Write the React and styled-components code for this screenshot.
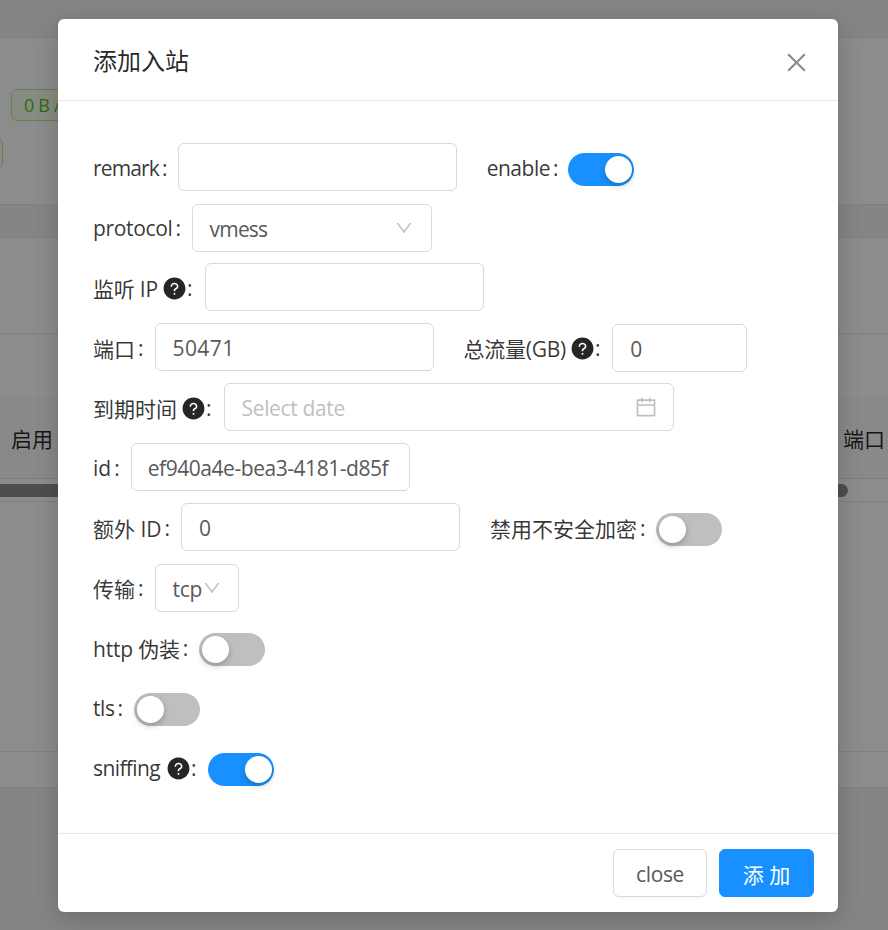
import React from 'react'
import styled, { createGlobalStyle } from 'styled-components'
import { AiFillQuestionCircle, AiOutlineCalendar, AiOutlineClose, AiOutlineDown } from 'react-icons/ai'

const GlobalStyle = createGlobalStyle`
  * { box-sizing: border-box; }
  html, body { margin: 0; height: 100%; overflow: hidden; }
  body {
    background: #f0f2f5;
    color: rgba(0, 0, 0, 0.85);
    font-family: "Open Sans", "Noto Sans CJK SC", sans-serif;
    font-size: 21px;
  }
`

const Page = styled.div`
  position: relative;
  width: 888px;
  height: 930px;
  overflow: hidden;
  display: flex;
  flex-direction: column;
`

const Band = styled.div`
  height: ${p => p.$h}px;
  flex: none;
`

const SummaryCard = styled.div`
  height: 168px;
  flex: none;
  background: #fff;
  border-top: 1px solid #e8e8e8;
  border-bottom: 1px solid #e8e8e8;
  padding: 51px 0 0 11px;
  display: flex;
  flex-direction: column;
  gap: 17px;
  align-items: flex-start;
`

const Tag = styled.span`
  height: ${p => p.$h}px;
  padding: 0 12px;
  display: inline-flex;
  align-items: center;
  font-size: 18px;
  letter-spacing: -0.3px;
  color: #52c41a;
  background: #f6ffed;
  border: 1px solid #b7eb8f;
  border-radius: 6px;
`

// second tag of the row, only its right end sticks out on the page
const TagEnd = styled(Tag)`
  width: 20px;
  padding: 0;
  margin-left: -28px;
`

const TableCard = styled.div`
  height: 551px;
  flex: none;
  background: #fff;
  border-bottom: 1px solid #e8e8e8;
  display: flex;
  flex-direction: column;
`

const Toolbar = styled.div`
  height: 97px;
  flex: none;
  border-top: 1px solid #e8e8e8;
  border-bottom: 1px solid #e8e8e8;
`

const TableHead = styled.div`
  height: 81px;
  margin-top: 64px;
  flex: none;
  background: #fafafa;
  border-bottom: 1px solid #e8e8e8;
  padding: 0 3px 0 11px;
  display: flex;
  align-items: center;
  justify-content: space-between;
`

const ScrollRow = styled.div`
  height: 23px;
  flex: none;
  padding-top: 5px;
  border-bottom: 1px solid #e8e8e8;
`

const ScrollThumb = styled.div`
  width: 848px;
  height: 13px;
  background: #8f8f8f;
  border-radius: 0 7px 7px 0;
`

const EmptyRows = styled.div`
  height: 250px;
  flex: none;
  border-bottom: 1px solid #e8e8e8;
`

const Mask = styled.div`
  position: absolute;
  inset: 0;
  background: rgba(0, 0, 0, 0.45);
  display: flex;
  justify-content: center;
  align-items: flex-start;
  padding: 19px 0 0 8px;
`

const Modal = styled.div`
  width: 780px;
  flex: none;
  background: #fff;
  border-radius: 6px;
  box-shadow: 0 6px 24px rgba(0, 0, 0, 0.2);
`

const ModalHeader = styled.div`
  height: 82px;
  padding: 0 28px 0 35px;
  display: flex;
  align-items: center;
  justify-content: space-between;
  border-bottom: 1px solid #e8e8e8;
`

const Title = styled.div`
  font-size: 24px;
  color: rgba(0, 0, 0, 0.85);
`

const CloseIcon = styled(AiOutlineClose)`
  width: 27px;
  height: 27px;
  margin-top: 6px;
  color: #8c8c8c;
`

const ModalBody = styled.div`
  padding: 36px;
`

const Row = styled.div`
  height: 60px;
  display: flex;
  align-items: center;
`

const Label = styled.label`
  display: flex;
  align-items: center;
  flex: none;
  height: 33px;
  padding-top: 1px;
  margin-left: ${p => p.$gap ?? -1}px;
  margin-right: ${p => p.$end ?? 11}px;
  color: rgba(0, 0, 0, 0.8);
  letter-spacing: ${p => p.$spacing || 0}px;
  white-space: nowrap;
  &::after {
    content: ":";
    margin-left: 3px;
  }
`

const HelpIcon = styled(AiFillQuestionCircle)`
  width: 25px;
  height: 25px;
  margin: 1px -3px 0 ${p => p.$gap ?? 4}px;
  color: #262626;
`

const Input = styled.input`
  display: block;
  flex: none;
  width: ${p => p.$w}px;
  height: 48px;
  margin-top: ${p => p.$down || 0}px;
  padding: 2px 16px 0 ${p => p.$left ?? 17}px;
  font: inherit;
  letter-spacing: ${p => p.$spacing ?? -0.35}px;
  color: #595959;
  background: #fff;
  border: 1px solid #d9d9d9;
  border-radius: 6px;
  outline: none;
  &::placeholder { color: #bfbfbf; }
`

const DateBox = styled.div`
  position: relative;
  flex: none;
`

const CalendarIcon = styled(AiOutlineCalendar)`
  position: absolute;
  top: 12px;
  right: 16px;
  width: 24px;
  height: 24px;
  color: #bfbfbf;
`

const Select = styled.div`
  flex: none;
  width: ${p => p.$w}px;
  height: 48px;
  margin-top: 2px;
  padding: 2px 17px 0 17px;
  display: flex;
  align-items: center;
  justify-content: space-between;
  letter-spacing: ${p => p.$spacing || 0}px;
  color: #595959;
  border: 1px solid #d9d9d9;
  border-radius: 6px;
`

const Arrow = styled(AiOutlineDown)`
  width: 20px;
  height: 20px;
  flex: none;
  margin-top: -2px;
  color: #bfbfbf;
`

const Switch = styled.div`
  position: relative;
  flex: none;
  width: 66px;
  height: 33px;
  margin-top: 4px;
  border-radius: 17px;
  background: ${p => (p.$on ? '#1890ff' : '#bfbfbf')};
  &::after {
    content: "";
    position: absolute;
    top: 3px;
    left: ${p => (p.$on ? '37px' : '3px')};
    width: 27px;
    height: 27px;
    border-radius: 50%;
    background: #fff;
    box-shadow: 0 3px 6px rgba(0, 35, 11, 0.25);
  }
`

const ModalFooter = styled.div`
  height: 79px;
  padding: 15px 24px 0 0;
  display: flex;
  justify-content: flex-end;
  gap: 12px;
  border-top: 1px solid #e8e8e8;
`

const Button = styled.button`
  width: ${p => p.$w}px;
  height: 48px;
  padding: 1px 0 0;
  font: inherit;
  letter-spacing: ${p => (p.$primary ? 0 : -0.4)}px;
  color: ${p => (p.$primary ? '#fff' : '#595959')};
  background: ${p => (p.$primary ? '#1890ff' : '#fff')};
  border: 1px solid ${p => (p.$primary ? '#1890ff' : '#d9d9d9')};
  border-radius: 6px;
  box-shadow: 0 2px 0 rgba(0, 0, 0, 0.015);
`

export default function App() {
  return (
    <Page>
      <GlobalStyle />
      <Band $h={37} />
      <SummaryCard>
        <Tag $h={32}>0 B / 0 B</Tag>
        <TagEnd $h={30} />
      </SummaryCard>
      <Band $h={32} />
      <TableCard>
        <Toolbar />
        <TableHead>
          <span>启用</span>
          <span>端口</span>
        </TableHead>
        <ScrollRow><ScrollThumb /></ScrollRow>
        <EmptyRows />
      </TableCard>

      <Mask>
        <Modal>
          <ModalHeader>
            <Title>添加入站</Title>
            <CloseIcon />
          </ModalHeader>
          <ModalBody>
            <Row>
              <Label $spacing={-0.85}>remark</Label>
              <Input $w={279} />
              <Label $gap={30} $end={10} $spacing={-0.5}>enable</Label>
              <Switch $on />
            </Row>
            <Row>
              <Label $spacing={-0.35}>protocol</Label>
              <Select $w={240} $spacing={-0.8}>
                vmess
                <Arrow />
              </Select>
            </Row>
            <Row>
              <Label $end={13} $spacing={-0.2}>监听 IP<HelpIcon /></Label>
              <Input $w={279} />
            </Row>
            <Row>
              <Label>端口</Label>
              <Input $w={279} $spacing={0.4} defaultValue="50471" />
              <Label $gap={30} $end={12} $spacing={-0.25}>总流量(GB)<HelpIcon /></Label>
              <Input $w={135} $down={2} defaultValue="0" />
            </Row>
            <Row>
              <Label $end={12}>到期时间<HelpIcon /></Label>
              <DateBox>
                <Input $w={450} placeholder="Select date" />
                <CalendarIcon />
              </DateBox>
            </Row>
            <Row>
              <Label>id</Label>
              <Input $w={279} $left={16} $spacing={-0.45} defaultValue="ef940a4e-bea3-4181-d85f" />
            </Row>
            <Row>
              <Label>额外 ID</Label>
              <Input $w={279} defaultValue="0" />
              <Label $gap={30} $end={10}>禁用不安全加密</Label>
              <Switch />
            </Row>
            <Row>
              <Label>传输</Label>
              <Select $w={84} $spacing={-0.3}>
                tcp
                <Arrow />
              </Select>
            </Row>
            <Row>
              <Label $spacing={-0.2}>http 伪装</Label>
              <Switch />
            </Row>
            <Row>
              <Label $spacing={-0.4}>tls</Label>
              <Switch />
            </Row>
            <Row>
              <Label $end={12} $spacing={-0.6}>sniffing<HelpIcon $gap={6} /></Label>
              <Switch $on />
            </Row>
          </ModalBody>
          <ModalFooter>
            <Button $w={94}>close</Button>
            <Button $w={95} $primary>添 加</Button>
          </ModalFooter>
        </Modal>
      </Mask>
    </Page>
  )
}
